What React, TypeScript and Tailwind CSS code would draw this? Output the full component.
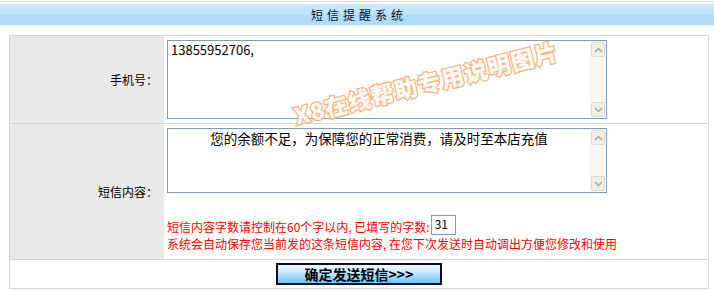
import React from "react";

const font = { fontFamily: '"Noto Sans CJK SC", "Noto Sans", sans-serif' };

function ScrollBar() {
  return (
    <div className="flex w-[16px] flex-col justify-between bg-[#f8f7f1] p-[1px]">
      <div className="flex h-[15px] w-[14px] items-center justify-center rounded-[2px] border border-[#dcdbd3] bg-[#efeee7]">
        <svg width="9" height="6" viewBox="0 0 9 6"><path d="M1 5 L4.5 1.5 L8 5" fill="none" stroke="#a9a9a3" strokeWidth="1.5" /></svg>
      </div>
      <div className="flex h-[15px] w-[14px] items-center justify-center rounded-[2px] border border-[#dcdbd3] bg-[#efeee7]">
        <svg width="9" height="6" viewBox="0 0 9 6"><path d="M1 1 L4.5 4.5 L8 1" fill="none" stroke="#a9a9a3" strokeWidth="1.5" /></svg>
      </div>
    </div>
  );
}

export default function App() {
  return (
    <div className="relative h-[291px] w-[714px] overflow-hidden bg-white text-black" style={font}>
      <div className="mt-[1px] h-[1px] bg-[#dcdcdc]" />
      <div className="mt-[2px] flex h-[21px] items-center justify-center bg-[linear-gradient(to_bottom,#cde9fb_0%,#bfe3fb_45%,#afdcfb_55%,#acdbfb_100%)]">
        <span className="pl-[4px] text-[12px] tracking-[4px] text-[#111]">短信提醒系统</span>
      </div>

      <div className="ml-[9px] mt-[10px] w-[700px] border-x border-t border-[#d6d6d6]">
        {/* row 1 */}
        <div className="flex h-[88px] border-b border-[#d6d6d6]">
          <div className="flex w-[154px] items-center justify-end bg-[#e9e9e9] pr-[6px] text-[12px]">手机号：</div>
          <div className="pl-[3px] pt-[4px]">
            <div className="flex h-[79px] w-[440px] border border-[#7f9db9] bg-white">
              <div className="flex-1 pl-[3px] pt-[1px] text-[13px] leading-[16px]">13855952706,</div>
              <ScrollBar />
            </div>
          </div>
        </div>

        {/* row 2 */}
        <div className="flex h-[136px] border-b border-[#d6d6d6]">
          <div className="flex w-[154px] items-center justify-end bg-[#e9e9e9] pr-[6px] text-[12px]">短信内容：</div>
          <div className="flex flex-col pl-[3px] pt-[4px]">
            <div className="flex h-[65px] w-[440px] border border-[#7f9db9] bg-white">
              <div className="flex-1 pt-[1px] text-center text-[13.5px] leading-[16px]">您的余额不足，为保障您的正常消费，请及时至本店充值</div>
              <ScrollBar />
            </div>
            <div className="mt-[22px] text-[12px] leading-[17px] text-[#ff0000]">
              <div className="flex items-end">
                <span>短信内容字数请控制在60个字以内, 已填写的字数:</span>
                <span className="ml-[1px] inline-block h-[20px] w-[25px] border border-[#7f9db9] pl-[3px] text-[12px] leading-[16px] text-black">31</span>
              </div>
              <div>系统会自动保存您当前发的这条短信内容, 在您下次发送时自动调出方便您修改和使用</div>
            </div>
          </div>
        </div>

        {/* row 3 */}
        <div className="flex h-[29px] items-center justify-center border-b border-[#d6d6d6]">
          <button className="flex h-[22px] w-[166px] items-center justify-center border-2 border-[#0d0d2a] bg-[linear-gradient(to_bottom,#eef9ff_0%,#cdeefe_35%,#8fd3fa_75%,#6ec4f5_100%)] text-[14px] font-bold leading-none text-black">
            确定发送短信&gt;&gt;&gt;
          </button>
        </div>
      </div>

      {/* watermark */}
      <div className="pointer-events-none absolute left-[426px] top-[83px] -translate-x-1/2 -translate-y-1/2 -rotate-[14deg] whitespace-nowrap text-[23px] font-black leading-none tracking-[1px] text-[#fffaf6] opacity-90 [-webkit-text-stroke:2.5px_#f8a86e] [paint-order:stroke_fill]">
        X8在线帮助专用说明图片
      </div>
    </div>
  );
}
